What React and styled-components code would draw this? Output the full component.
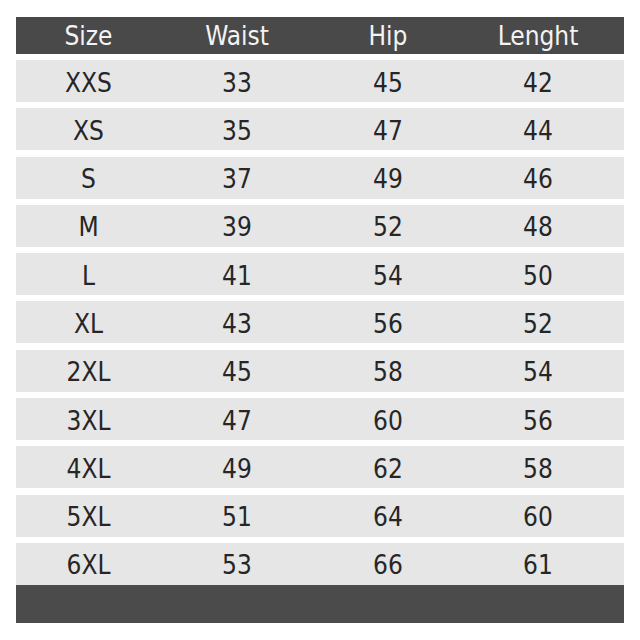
import React from "react";
import styled, { createGlobalStyle } from "styled-components";

const Global = createGlobalStyle`
  html, body { margin: 0; padding: 0; background: #ffffff; }
  body { font-family: "DejaVu Sans Condensed", "DejaVu Sans", "Liberation Sans", sans-serif; }
`;

const Page = styled.div`
  width: 640px;
  height: 640px;
  padding: 17px 16px 0 16px;
  box-sizing: border-box;
  background: #ffffff;
`;

const Table = styled.div`
  width: 608px;
  display: flex;
  flex-direction: column;
`;

const Row = styled.div`
  display: grid;
  grid-template-columns: 145px 152px 150px 150px;
  align-items: center;
  height: ${(p) => p.$h}px;
  background: ${(p) => (p.$head ? "#494949" : "#e6e6e6")};
  color: ${(p) => (p.$head ? "#f3f3f3" : "#262626")};
  margin-bottom: ${(p) => p.$mb}px;
`;

const Cell = styled.div`
  text-align: center;
  font-size: 26px;
  line-height: 1;
  padding-top: ${(p) => (p.$head ? 0 : 3)}px;
`;

const Footer = styled.div`
  height: 38px;
  background: #4b4b4b;
`;

const head = ["Size", "Waist", "Hip", "Lenght"];
const rows = [
  ["XXS", 33, 45, 42],
  ["XS", 35, 47, 44],
  ["S", 37, 49, 46],
  ["M", 39, 52, 48],
  ["L", 41, 54, 50],
  ["XL", 43, 56, 52],
  ["2XL", 45, 58, 54],
  ["3XL", 47, 60, 56],
  ["4XL", 49, 62, 58],
  ["5XL", 51, 64, 60],
  ["6XL", 53, 66, 61],
];

export default function App() {
  return (
    <>
      <Global />
      <Page>
        <Table>
          <Row $head $h={37} $mb={6}>
            {head.map((h) => (
              <Cell $head key={h}>{h}</Cell>
            ))}
          </Row>
          {rows.map((r, i) => (
            <Row key={r[0]} $h={42} $mb={i === rows.length - 1 ? 0 : 6.3}>
              {r.map((c, j) => (
                <Cell key={j}>{c}</Cell>
              ))}
            </Row>
          ))}
          <Footer />
        </Table>
      </Page>
    </>
  );
}
